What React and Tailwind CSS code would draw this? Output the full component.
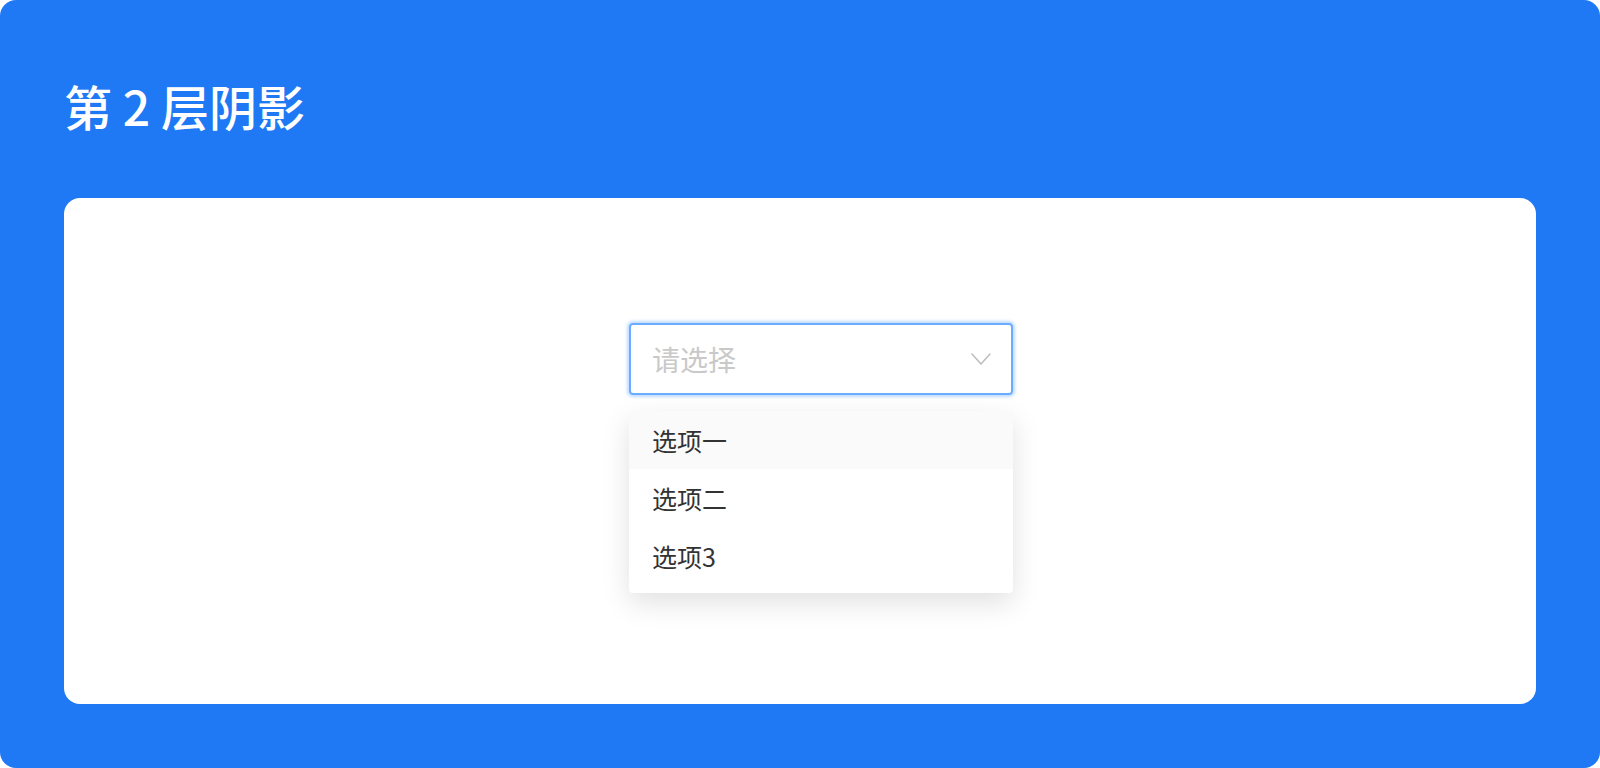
export default function App() {
  const options = ["选项一", "选项二", "选项3"];
  return (
    <div className="w-[1600px] h-[768px] bg-white">
      <div
        className="w-full h-full bg-[#2079f4] rounded-[16px] px-16 pb-16 flex flex-col"
        style={{ fontFamily: '"Noto Sans CJK SC", "Noto Sans", sans-serif' }}
      >
        <h1 className="pt-[81px] text-[48px] leading-[48px] font-medium text-white">
          第 2 层阴影
        </h1>
        <div className="mt-[69px] flex-1 bg-white rounded-[16px] pl-[565px] pt-[125px]">
          <div className="w-[384px]">
            {/* select trigger */}
            <div className="h-[72px] border-2 border-[#6aacff] rounded-[4px] shadow-[0_0_3px_2px_rgba(130,185,255,0.5)] flex items-center justify-between pl-[21px] pr-[20px]">
              <span className="text-[28px] leading-none text-[#c9c9c9]">请选择</span>
              <svg width="20" height="12" viewBox="0 0 20 12" fill="none">
                <path
                  d="M1 1 L10 11 L19 1"
                  stroke="#bdbdbd"
                  strokeWidth="1.5"
                  strokeLinecap="round"
                  strokeLinejoin="round"
                />
              </svg>
            </div>
            {/* dropdown panel */}
            <div className="mt-[16px] bg-white rounded-b-[4px] pb-[8px] shadow-[0_10px_28px_rgba(0,0,0,0.12)]">
              {options.map((o, i) => (
                <div
                  key={o}
                  className={
                    "h-[58px] flex items-center pl-[23px] text-[25px] leading-none text-[#333333] " +
                    (i === 0 ? "bg-[#fafafa]" : "")
                  }
                >
                  {o}
                </div>
              ))}
            </div>
          </div>
        </div>
      </div>
    </div>
  );
}
